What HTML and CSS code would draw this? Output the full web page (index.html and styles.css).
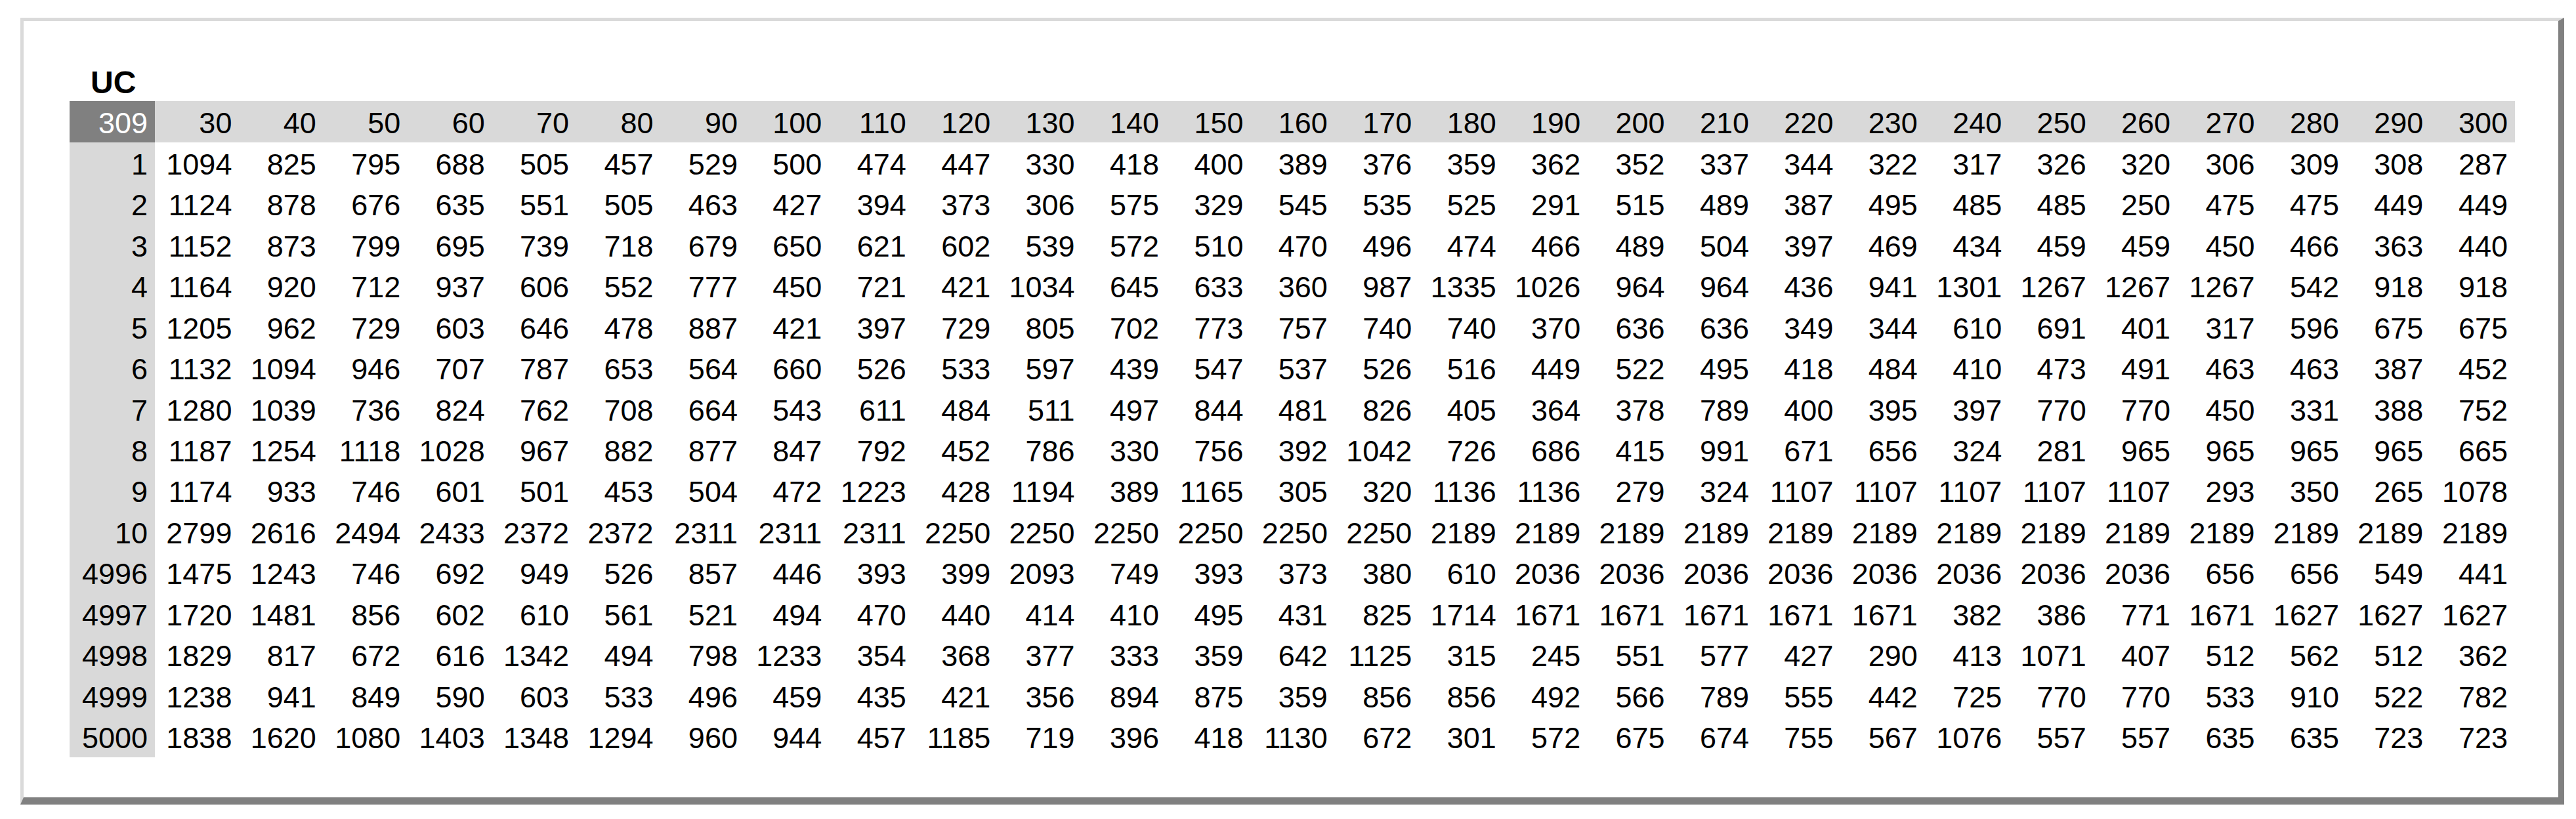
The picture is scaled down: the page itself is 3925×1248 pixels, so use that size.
FILE: index.html
```html
<!DOCTYPE html>
<html lang="en">
<head>
<meta charset="utf-8">
<title>UC</title>
<link rel="stylesheet" href="styles.css">
</head>
<body>
<div class="frame">
  <div class="title">UC</div>
  <table class="grid">
    <thead>
      <tr><th class="corner">309</th><th>30</th><th>40</th><th>50</th><th>60</th><th>70</th><th>80</th><th>90</th><th>100</th><th>110</th><th>120</th><th>130</th><th>140</th><th>150</th><th>160</th><th>170</th><th>180</th><th>190</th><th>200</th><th>210</th><th>220</th><th>230</th><th>240</th><th>250</th><th>260</th><th>270</th><th>280</th><th>290</th><th>300</th></tr>
    </thead>
    <tbody>
      <tr><th>1</th><td>1094</td><td>825</td><td>795</td><td>688</td><td>505</td><td>457</td><td>529</td><td>500</td><td>474</td><td>447</td><td>330</td><td>418</td><td>400</td><td>389</td><td>376</td><td>359</td><td>362</td><td>352</td><td>337</td><td>344</td><td>322</td><td>317</td><td>326</td><td>320</td><td>306</td><td>309</td><td>308</td><td>287</td></tr>
      <tr><th>2</th><td>1124</td><td>878</td><td>676</td><td>635</td><td>551</td><td>505</td><td>463</td><td>427</td><td>394</td><td>373</td><td>306</td><td>575</td><td>329</td><td>545</td><td>535</td><td>525</td><td>291</td><td>515</td><td>489</td><td>387</td><td>495</td><td>485</td><td>485</td><td>250</td><td>475</td><td>475</td><td>449</td><td>449</td></tr>
      <tr><th>3</th><td>1152</td><td>873</td><td>799</td><td>695</td><td>739</td><td>718</td><td>679</td><td>650</td><td>621</td><td>602</td><td>539</td><td>572</td><td>510</td><td>470</td><td>496</td><td>474</td><td>466</td><td>489</td><td>504</td><td>397</td><td>469</td><td>434</td><td>459</td><td>459</td><td>450</td><td>466</td><td>363</td><td>440</td></tr>
      <tr><th>4</th><td>1164</td><td>920</td><td>712</td><td>937</td><td>606</td><td>552</td><td>777</td><td>450</td><td>721</td><td>421</td><td>1034</td><td>645</td><td>633</td><td>360</td><td>987</td><td>1335</td><td>1026</td><td>964</td><td>964</td><td>436</td><td>941</td><td>1301</td><td>1267</td><td>1267</td><td>1267</td><td>542</td><td>918</td><td>918</td></tr>
      <tr><th>5</th><td>1205</td><td>962</td><td>729</td><td>603</td><td>646</td><td>478</td><td>887</td><td>421</td><td>397</td><td>729</td><td>805</td><td>702</td><td>773</td><td>757</td><td>740</td><td>740</td><td>370</td><td>636</td><td>636</td><td>349</td><td>344</td><td>610</td><td>691</td><td>401</td><td>317</td><td>596</td><td>675</td><td>675</td></tr>
      <tr><th>6</th><td>1132</td><td>1094</td><td>946</td><td>707</td><td>787</td><td>653</td><td>564</td><td>660</td><td>526</td><td>533</td><td>597</td><td>439</td><td>547</td><td>537</td><td>526</td><td>516</td><td>449</td><td>522</td><td>495</td><td>418</td><td>484</td><td>410</td><td>473</td><td>491</td><td>463</td><td>463</td><td>387</td><td>452</td></tr>
      <tr><th>7</th><td>1280</td><td>1039</td><td>736</td><td>824</td><td>762</td><td>708</td><td>664</td><td>543</td><td>611</td><td>484</td><td>511</td><td>497</td><td>844</td><td>481</td><td>826</td><td>405</td><td>364</td><td>378</td><td>789</td><td>400</td><td>395</td><td>397</td><td>770</td><td>770</td><td>450</td><td>331</td><td>388</td><td>752</td></tr>
      <tr><th>8</th><td>1187</td><td>1254</td><td>1118</td><td>1028</td><td>967</td><td>882</td><td>877</td><td>847</td><td>792</td><td>452</td><td>786</td><td>330</td><td>756</td><td>392</td><td>1042</td><td>726</td><td>686</td><td>415</td><td>991</td><td>671</td><td>656</td><td>324</td><td>281</td><td>965</td><td>965</td><td>965</td><td>965</td><td>665</td></tr>
      <tr><th>9</th><td>1174</td><td>933</td><td>746</td><td>601</td><td>501</td><td>453</td><td>504</td><td>472</td><td>1223</td><td>428</td><td>1194</td><td>389</td><td>1165</td><td>305</td><td>320</td><td>1136</td><td>1136</td><td>279</td><td>324</td><td>1107</td><td>1107</td><td>1107</td><td>1107</td><td>1107</td><td>293</td><td>350</td><td>265</td><td>1078</td></tr>
      <tr><th>10</th><td>2799</td><td>2616</td><td>2494</td><td>2433</td><td>2372</td><td>2372</td><td>2311</td><td>2311</td><td>2311</td><td>2250</td><td>2250</td><td>2250</td><td>2250</td><td>2250</td><td>2250</td><td>2189</td><td>2189</td><td>2189</td><td>2189</td><td>2189</td><td>2189</td><td>2189</td><td>2189</td><td>2189</td><td>2189</td><td>2189</td><td>2189</td><td>2189</td></tr>
      <tr><th>4996</th><td>1475</td><td>1243</td><td>746</td><td>692</td><td>949</td><td>526</td><td>857</td><td>446</td><td>393</td><td>399</td><td>2093</td><td>749</td><td>393</td><td>373</td><td>380</td><td>610</td><td>2036</td><td>2036</td><td>2036</td><td>2036</td><td>2036</td><td>2036</td><td>2036</td><td>2036</td><td>656</td><td>656</td><td>549</td><td>441</td></tr>
      <tr><th>4997</th><td>1720</td><td>1481</td><td>856</td><td>602</td><td>610</td><td>561</td><td>521</td><td>494</td><td>470</td><td>440</td><td>414</td><td>410</td><td>495</td><td>431</td><td>825</td><td>1714</td><td>1671</td><td>1671</td><td>1671</td><td>1671</td><td>1671</td><td>382</td><td>386</td><td>771</td><td>1671</td><td>1627</td><td>1627</td><td>1627</td></tr>
      <tr><th>4998</th><td>1829</td><td>817</td><td>672</td><td>616</td><td>1342</td><td>494</td><td>798</td><td>1233</td><td>354</td><td>368</td><td>377</td><td>333</td><td>359</td><td>642</td><td>1125</td><td>315</td><td>245</td><td>551</td><td>577</td><td>427</td><td>290</td><td>413</td><td>1071</td><td>407</td><td>512</td><td>562</td><td>512</td><td>362</td></tr>
      <tr><th>4999</th><td>1238</td><td>941</td><td>849</td><td>590</td><td>603</td><td>533</td><td>496</td><td>459</td><td>435</td><td>421</td><td>356</td><td>894</td><td>875</td><td>359</td><td>856</td><td>856</td><td>492</td><td>566</td><td>789</td><td>555</td><td>442</td><td>725</td><td>770</td><td>770</td><td>533</td><td>910</td><td>522</td><td>782</td></tr>
      <tr><th>5000</th><td>1838</td><td>1620</td><td>1080</td><td>1403</td><td>1348</td><td>1294</td><td>960</td><td>944</td><td>457</td><td>1185</td><td>719</td><td>396</td><td>418</td><td>1130</td><td>672</td><td>301</td><td>572</td><td>675</td><td>674</td><td>755</td><td>567</td><td>1076</td><td>557</td><td>557</td><td>635</td><td>635</td><td>723</td><td>723</td></tr>
    </tbody>
  </table>
</div>
</body>
</html>
```

FILE: styles.css
```css
html, body {
  margin: 0;
  padding: 0;
  background: #ffffff;
}

body {
  font-family: "Liberation Sans", Arial, sans-serif;
  color: #000000;
}

.frame {
  box-sizing: border-box;
  width: 3876px;
  height: 1199px;
  margin: 27px 0 0 31px;
  padding: 70px 0 0 70px;
  border-top: 5px solid #dadada;
  border-left: 5px solid #dadada;
  border-right: 9px solid #808080;
  border-bottom: 11px solid #808080;
  background: #ffffff;
}

.title {
  height: 52px;
  padding-left: 32px;
  font-size: 48px;
  line-height: 47px;
  font-weight: bold;
}

.grid {
  border-collapse: collapse;
  table-layout: fixed;
  width: 3726px;
  font-size: 45px;
}

.grid th,
.grid td {
  padding: 5px 11px 0 0;
  text-align: right;
  vertical-align: middle;
  font-weight: normal;
  line-height: 50px;
  white-space: nowrap;
  box-sizing: border-box;
}

.grid thead tr {
  height: 63px;
}

.grid tbody tr {
  height: 62.47px;
}

.grid thead th {
  background: #d9d9d9;
}

.grid thead th.corner {
  width: 130px;
  background: #808080;
  color: #ffffff;
}

.grid tbody th {
  background: #d9d9d9;
}
```
